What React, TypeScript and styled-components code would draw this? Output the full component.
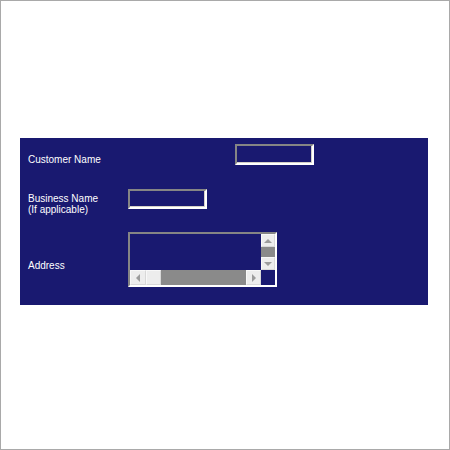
import styled, { createGlobalStyle } from "styled-components";

const GlobalStyle = createGlobalStyle`
  html, body {
    margin: 0;
    padding: 0;
    background: #ffffff;
  }
  * {
    box-sizing: border-box;
  }
`;

const Frame = styled.div`
  width: 450px;
  height: 450px;
  border: 1px solid #a9a9a9;
  background: #ffffff;
  padding: 137px 0 0 19px;
`;

const Panel = styled.div`
  width: 408px;
  height: 167px;
  background: #191970;
  padding: 6px 8px;
  font-family: "Liberation Sans", Arial, sans-serif;
  font-size: 10px;
  line-height: 11px;
  color: #ffffff;
`;

const Row = styled.div<{ $gap: number }>`
  display: grid;
  grid-template-columns: 100px 1fr;
  align-items: start;
  margin-top: ${(p) => p.$gap}px;
`;

const Label = styled.div<{ $offset: number }>`
  margin-top: ${(p) => p.$offset}px;
`;

const TextBox = styled.div<{ $indent?: number }>`
  width: 79px;
  height: ${(p) => (p.$indent ? 21 : 20)}px;
  margin-left: ${(p) => p.$indent || 0}px;
  background: #191970;
  border-style: solid;
  border-width: 2px;
  border-color: #858585 #ffffff #ffffff #858585;
  box-shadow: inset -1px -1px 0 #d4d0c8;
`;

const Area = styled.div`
  width: 149px;
  height: 55px;
  border-style: solid;
  border-width: 2px;
  border-color: #858585 #ffffff #ffffff #858585;
  display: grid;
  grid-template-columns: 1fr 14px;
  grid-template-rows: 1fr 15px;
  background: #191970;
`;

const VBar = styled.div`
  display: flex;
  flex-direction: column;
`;

const HBar = styled.div`
  display: flex;
`;

const ScrollButton = styled.div<{ $size: number }>`
  flex: 0 0 ${(p) => p.$size}px;
  background: #ededed;
  border: 1px solid #f8f8f8;
  border-right-color: #d8d8d8;
  border-bottom-color: #d8d8d8;
  display: flex;
  align-items: center;
  justify-content: center;
`;

const Track = styled.div`
  flex: 1;
  background: #8a8a8a;
`;

const Arrow = styled.div<{ $dir: "up" | "down" | "left" | "right" }>`
  width: 0;
  height: 0;
  border: 4px solid transparent;
  ${(p) =>
    p.$dir === "up"
      ? "border-bottom-color: #9c9c9c; border-top-width: 0;"
      : p.$dir === "down"
      ? "border-top-color: #9c9c9c; border-bottom-width: 0;"
      : p.$dir === "left"
      ? "border-right-color: #9c9c9c; border-left-width: 0;"
      : "border-left-color: #9c9c9c; border-right-width: 0;"}
`;

const Corner = styled.div`
  background: #191970;
`;

export default function App() {
  return (
    <>
      <GlobalStyle />
      <Frame>
        <Panel>
          <Row $gap={0}>
            <Label $offset={10}>Customer Name</Label>
            <TextBox $indent={107} />
          </Row>
          <Row $gap={24}>
            <Label $offset={4}>
              Business Name
              <br />
              (If applicable)
            </Label>
            <TextBox />
          </Row>
          <Row $gap={17}>
            <Label $offset={28}>Address</Label>
            <Area>
              <div />
              <VBar>
                <ScrollButton $size={13}>
                  <Arrow $dir="up" />
                </ScrollButton>
                <Track />
                <ScrollButton $size={13}>
                  <Arrow $dir="down" />
                </ScrollButton>
              </VBar>
              <HBar>
                <ScrollButton $size={16}>
                  <Arrow $dir="left" />
                </ScrollButton>
                <ScrollButton $size={15} />
                <Track />
                <ScrollButton $size={15}>
                  <Arrow $dir="right" />
                </ScrollButton>
              </HBar>
              <Corner />
            </Area>
          </Row>
        </Panel>
      </Frame>
    </>
  );
}
